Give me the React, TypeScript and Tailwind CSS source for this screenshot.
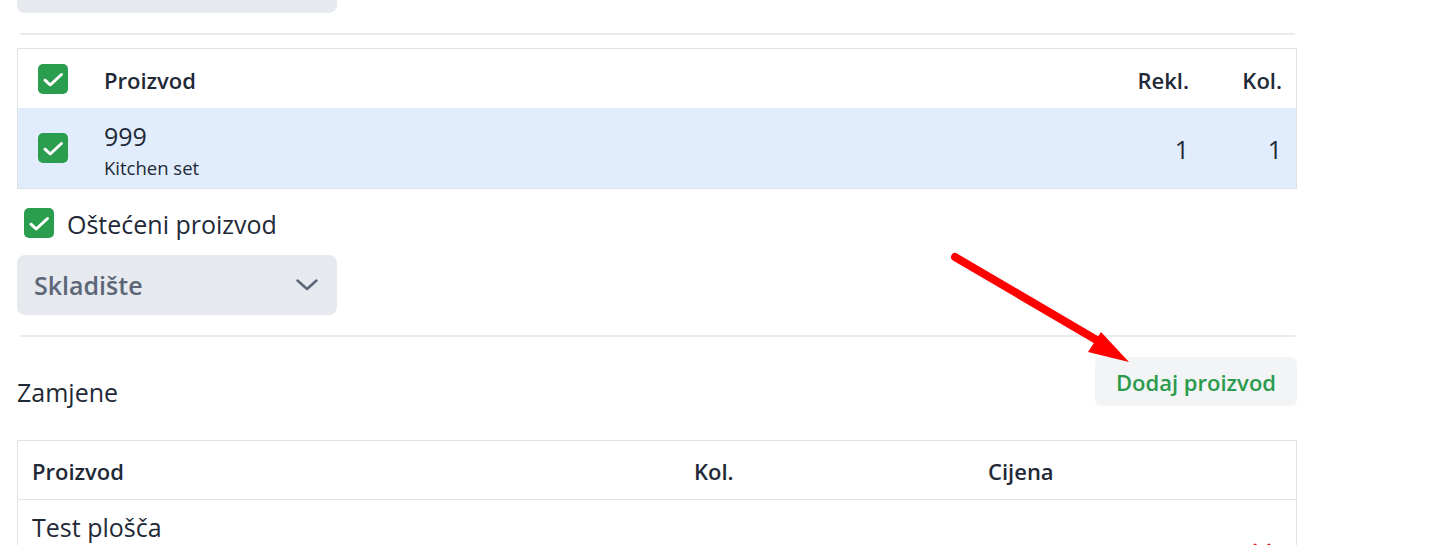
import React from "react";

const Check = ({ className = "" }: { className?: string }) => (
  <div className={`w-[30px] h-[30px] rounded-[5px] bg-[#2a9d4f] flex items-center justify-center shrink-0 ${className}`}>
    <svg width="30" height="30" viewBox="0 0 30 30" fill="none">
      <path d="M7 16.2 L12.2 21 L23.5 10.5" stroke="#fff" strokeWidth="3" strokeLinecap="round" strokeLinejoin="round" />
    </svg>
  </div>
);

export default function App() {
  return (
    <div
      className="relative w-[1433px] h-[545px] overflow-hidden bg-white text-[#1f2937]"
      style={{ fontFamily: '"Open Sans", "Noto Sans", sans-serif' }}
    >
      <div className="pl-[17px] w-[1297px] flex flex-col">
        {/* bottom of previous select */}
        <div className="h-[13px] w-[320px] bg-[#e6e9ee] rounded-b-[8px]" />
        <div className="mt-[20px] ml-[3px] w-[1275px] h-[2px] bg-[#e9ecef]" />

        {/* table 1 */}
        <div className="mt-[13px] border border-[#dee2e6]">
          <div className="h-[59px] flex items-center">
            <div className="w-[86px] pl-[20px]">
              <Check />
            </div>
            <div className="flex-1 text-[22px] font-semibold leading-[30px] pt-[2px]">Proizvod</div>
            <div className="w-[100px] pr-[14px] text-right text-[22px] font-semibold leading-[30px] pt-[2px]">Rekl.</div>
            <div className="w-[93px] pr-[14px] text-right text-[22px] font-semibold leading-[30px] pt-[2px]">Kol.</div>
          </div>
          <div className="h-[80px] flex items-center bg-[#e1edfc]">
            <div className="w-[86px] pl-[20px]">
              <Check />
            </div>
            <div className="flex-1 flex flex-col pt-[3px]">
              <span className="text-[25px] leading-[32px]">999</span>
              <span className="text-[18.5px] leading-[24px] mt-[4px]">Kitchen set</span>
            </div>
            <div className="w-[100px] pr-[14px] text-right text-[25px] pt-[4px]">1</div>
            <div className="w-[93px] pr-[14px] text-right text-[25px] pt-[4px]">1</div>
          </div>
        </div>

        {/* damaged checkbox */}
        <div className="mt-[19px] pl-[7px] flex items-center gap-[13px] h-[30px]">
          <Check />
          <span className="text-[25px] leading-[34px] pt-[2px]">Oštećeni proizvod</span>
        </div>

        {/* select */}
        <div className="mt-[17px] h-[60px] w-[320px] rounded-[8px] bg-[#e6e9ee] flex items-center justify-between pl-[17px] pr-[19px]">
          <span className="text-[25px] font-semibold text-[#5c6677] pt-[2px]">Skladište</span>
          <svg width="22" height="12" viewBox="0 0 22 12" fill="none">
            <path d="M1.5 1.5 L11 10 L20.5 1.5" stroke="#5c6677" strokeWidth="2.5" strokeLinecap="round" strokeLinejoin="round" />
          </svg>
        </div>

        <div className="mt-[20px] ml-[3px] w-[1275px] h-[2px] bg-[#e9ecef]" />

        {/* Zamjene row */}
        <div className="mt-[20px] flex items-end justify-between">
          <span className="text-[25px] leading-[30px] mb-[-1px]">Zamjene</span>
          <button className="h-[49px] w-[202px] rounded-[6px] bg-[#f3f4f6] text-[#2a9a4c] text-[22px] font-semibold flex items-center justify-center pt-[2px]">
            Dodaj proizvod
          </button>
        </div>

        {/* table 2 */}
        <div className="mt-[34px] border border-[#dee2e6]">
          <div className="h-[59px] flex items-center border-b border-[#dee2e6] text-[22px] font-semibold pt-[3px]">
            <div className="w-[662px] pl-[14px]">Proizvod</div>
            <div className="w-[294px] pl-[14px]">Kol.</div>
            <div className="flex-1 pl-[14px]">Cijena</div>
          </div>
          <div className="h-[80px] flex items-start">
            <div className="w-[662px] pl-[14px] pt-[11px] text-[25px] leading-[32px]">Test plošča</div>
            <div className="flex-1" />
            <div className="pt-[43px] pr-[25px]">
              <svg width="18" height="18" viewBox="0 0 18 18" fill="none">
                <path d="M2 2 L16 16 M16 2 L2 16" stroke="#ef1c1c" strokeWidth="3" strokeLinecap="round" />
              </svg>
            </div>
          </div>
        </div>
      </div>

      {/* annotation arrow */}
      <svg className="absolute left-0 top-0 pointer-events-none" width="1433" height="545" viewBox="0 0 1433 545">
        <line x1="955" y1="257" x2="1100" y2="342" stroke="#ff0000" strokeWidth="8" strokeLinecap="round" />
        <polygon points="1129,362 1088,352 1101,332" fill="#ff0000" />
      </svg>
    </div>
  );
}
